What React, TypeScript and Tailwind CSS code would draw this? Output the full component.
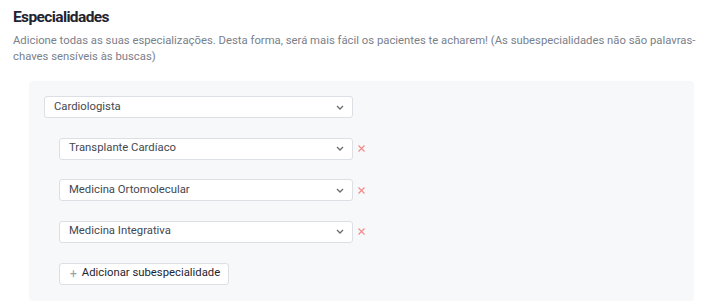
import React from "react";

function Chevron() {
  return (
    <svg width="8" height="5" viewBox="0 0 8 5" className="shrink-0">
      <path d="M1 1 L4 4 L7 1" fill="none" stroke="#6b6b6b" strokeWidth="1.3" />
    </svg>
  );
}

function XIcon() {
  return (
    <svg width="7" height="7" viewBox="0 0 7 7" className="shrink-0">
      <path d="M0.5 0.5 L6.5 6.5 M6.5 0.5 L0.5 6.5" fill="none" stroke="#f28b8b" strokeWidth="1.2" />
    </svg>
  );
}

function Select({ label, width }: { label: string; width: string }) {
  return (
    <div
      className={`${width} h-[22px] flex items-center justify-between bg-white border border-[#dcdfe4] rounded-[3px] pl-[9px] pr-[8px] text-[11.3px] text-[#444850]`}
    >
      <span>{label}</span>
      <Chevron />
    </div>
  );
}

export default function App() {
  const subs = ["Transplante Cardíaco", "Medicina Ortomolecular", "Medicina Integrativa"];
  return (
    <div className="w-[707px] h-[307px] bg-white pl-[13px] pt-[7px]" style={{ fontFamily: "Roboto, 'Liberation Sans', sans-serif" }}>
      <h1 className="text-[15.5px] leading-[20px] font-bold tracking-[-0.04em] text-[#1f2430]">Especialidades</h1>
      <p className="mt-[6px] w-[690px] text-[11.3px] leading-[16px] text-[#7a808a]">
        Adicione todas as suas especializações. Desta forma, será mais fácil os pacientes te acharem! (As subespecialidades não são palavras-chaves sensíveis às buscas)
      </p>
      <div className="mt-[16px] ml-[16px] w-[665px] h-[220px] bg-[#f7f8fa] rounded-[4px] pt-[15px] pl-[15px] flex flex-col">
        <Select label="Cardiologista" width="w-[309px]" />
        <div className="pl-[15px] flex flex-col">
          {subs.map((s) => (
            <div key={s} className="mt-[19.5px] flex items-center gap-[5px]">
              <Select label={s} width="w-[294px]" />
              <XIcon />
            </div>
          ))}
          <button className="mt-[20px] w-[170px] h-[22px] flex items-center whitespace-nowrap bg-white border border-[#dcdfe4] rounded-[3px] pl-[10px] text-[11.3px] text-[#1f2430]">
            <span className="text-[#9a9ea6] mr-[5px] text-[12px] leading-none">+</span>
            Adicionar subespecialidade
          </button>
        </div>
      </div>
    </div>
  );
}
